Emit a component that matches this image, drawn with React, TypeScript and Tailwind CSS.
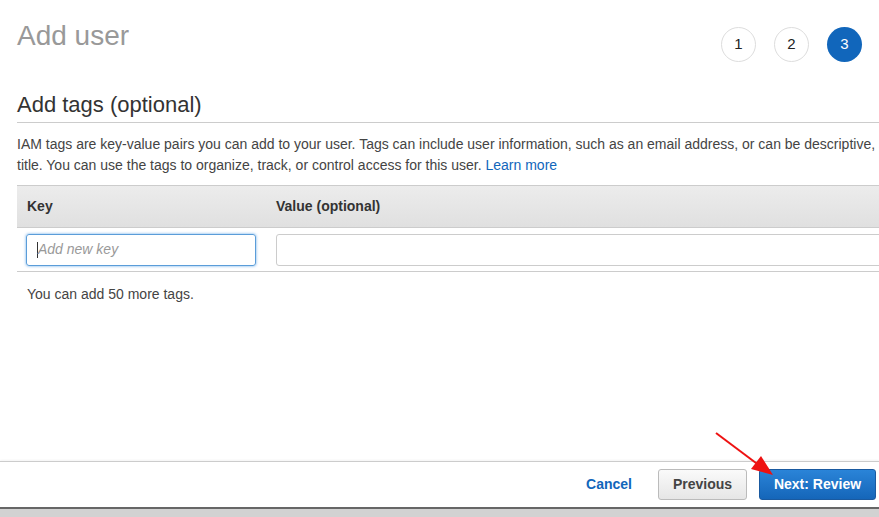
import * as React from 'react'

function Step({ n, active }: { n: number; active?: boolean }) {
  return (
    <div
      className={
        active
          ? 'size-[35px] rounded-full bg-[#1166bb] text-white flex items-center justify-center text-[15px]'
          : 'size-[35px] rounded-full border border-[#dddddd] bg-white text-[#222] flex items-center justify-center text-[15px]'
      }
    >
      {n}
    </div>
  )
}

export default function App() {
  return (
    <div className="relative w-[879px] h-[517px] overflow-hidden bg-white font-['Liberation_Sans',Arial,sans-serif] text-[#444]">
      <div className="w-[1000px] h-[461px] pl-[17px]">
        <div className="flex items-start justify-between pt-[19px] w-[845px]">
          <h1 className="text-[28px] leading-[34px] text-[#999999]">Add user</h1>
          <div className="flex gap-[18px] pt-[8px]">
            <Step n={1} />
            <Step n={2} />
            <Step n={3} active />
          </div>
        </div>
        <h2 className="mt-[30px] text-[22px] leading-[26px] text-[#333] pb-[4px] border-b border-[#cccccc]">
          Add tags (optional)
        </h2>
        <p className="mt-[11px] text-[14px] leading-[21px] text-[#444] whitespace-nowrap">
          IAM tags are key-value pairs you can add to your user. Tags can include user information, such as an email address, or can be descriptive, such as a job
          <br />
          title. You can use the tags to organize, track, or control access for this user.{' '}
          <span className="text-[#1166bb]">Learn more</span>
        </p>
        <div className="mt-[9px] border-t border-[#cccccc]">
          <div className="flex h-[42px] items-center bg-gradient-to-b from-[#ececec] to-[#e0e0e0] border-b border-[#cccccc] text-[14px] font-bold text-[#333]">
            <div className="w-[249px] pl-[10px]">Key</div>
            <div className="pl-[10px]">Value (optional)</div>
          </div>
          <div className="flex h-[44px] items-center border-b border-[#cccccc]">
            <div className="w-[249px] pl-[9px]">
              <div className="h-[32px] w-[230px] rounded-[3px] border border-[#5b9dd9] shadow-[0_0_3px_rgba(0,115,220,0.6)] flex items-center pl-[10px]">
                <span className="w-px h-[16px] bg-[#333]" />
                <span className="italic text-[14px] text-[#999]">Add new key</span>
              </div>
            </div>
            <div className="pl-[10px]">
              <div className="h-[32px] w-[700px] rounded-[3px] border border-[#cccccc]" />
            </div>
          </div>
          <p className="pl-[10px] mt-[12px] text-[14px] text-[#444]">You can add 50 more tags.</p>
        </div>
      </div>
      <div className="h-[48px] border-t border-[#cccccc] shadow-[0_-1px_2px_rgba(0,0,0,0.05)] border-b-2 border-b-[#666] flex items-center justify-end pr-[3px] gap-[12px]">
        <span className="text-[14px] font-bold text-[#1166bb] mr-[14px]">Cancel</span>
        <button className="h-[31px] w-[89px] rounded-[3px] border border-[#bbbbbb] bg-gradient-to-b from-[#fafafa] to-[#e6e6e6] text-[14px] font-bold text-[#444]">
          Previous
        </button>
        <button className="h-[31px] w-[117px] rounded-[3px] border border-[#1a5aa0] bg-gradient-to-b from-[#2a84d8] to-[#1566b9] text-[14px] font-bold text-white">
          Next: Review
        </button>
      </div>
      <div className="h-[8px] bg-[#d2d2d2]" />
      <svg className="absolute left-0 top-0 pointer-events-none" width="879" height="517">
        <line x1="716" y1="433" x2="760" y2="466" stroke="#ee1111" strokeWidth="2" />
        <polygon points="773,475 751,469 761,456" fill="#ee1111" />
      </svg>
    </div>
  )
}
